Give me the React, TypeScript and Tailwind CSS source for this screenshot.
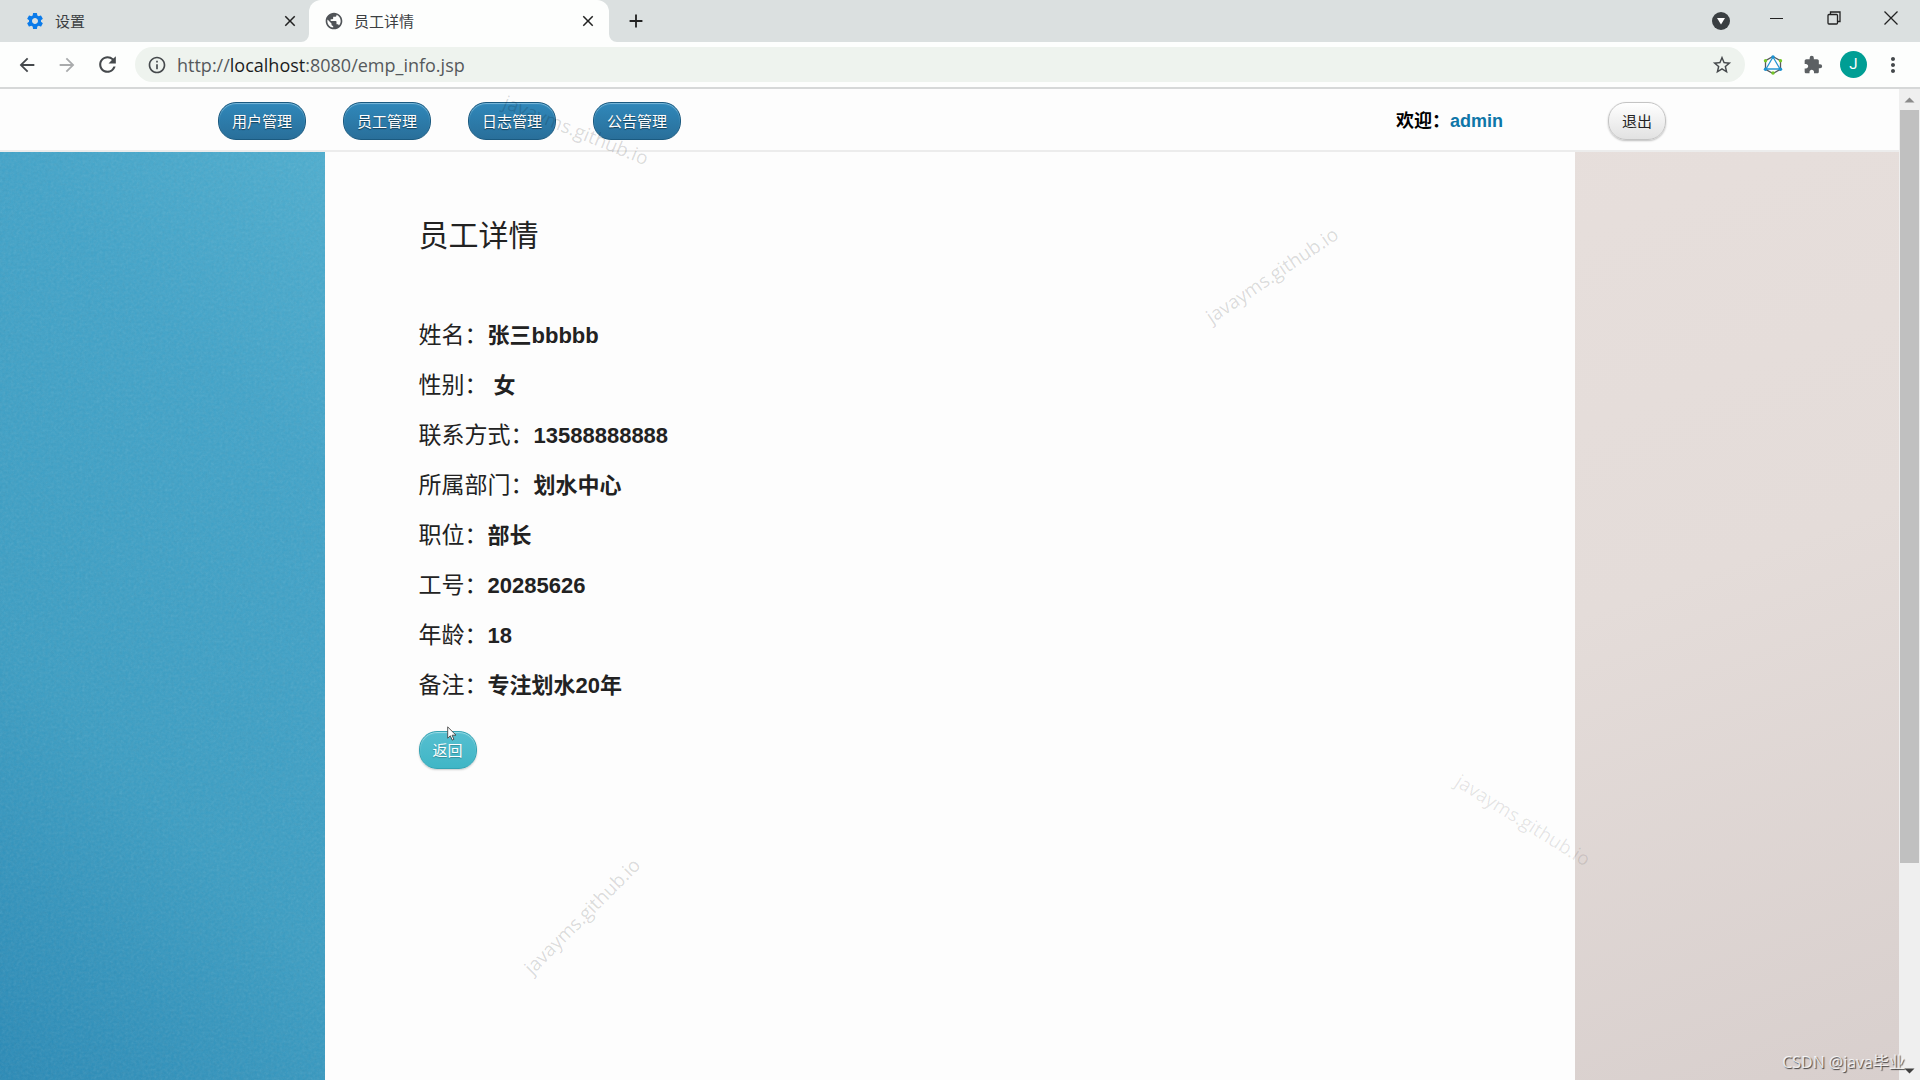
import { MdSettings, MdPublic, MdExtension, MdClose, MdAdd, MdArrowBack, MdArrowForward, MdRefresh, MdInfoOutline, MdStarBorder, MdMoreVert } from "react-icons/md";

const navItems = ["用户管理", "员工管理", "日志管理", "公告管理"];

const employee = [
    { label: "姓名：", value: "张三bbbbb" },
    { label: "性别：", value: "\u00a0女" },
    { label: "联系方式：", value: "13588888888" },
    { label: "所属部门：", value: "划水中心" },
    { label: "职位：", value: "部长" },
    { label: "工号：", value: "20285626" },
    { label: "年龄：", value: "18" },
    { label: "备注：", value: "专注划水20年" },
];

function TabBar() {
    return (
        <div className="flex h-[42px] shrink-0 bg-[#dbe0e0] text-[15px] text-[#3c4043]">
            <div className="flex w-[309px] items-center pl-[25px] pr-[10px]">
                <MdSettings className="h-5 w-5 text-[#0b7bea]" />
                <span className="ml-[10px] flex-1 pt-[2px]">设置</span>
                <button aria-label="关闭设置" className="text-[#222]">
                    <MdClose className="h-[18px] w-[18px]" />
                </button>
            </div>
            <div className="relative flex w-[300px] items-center rounded-t-xl bg-[#fdfefd] pl-[15px] pr-[12px]">
                {/* flared tab feet */}
                <svg className="absolute bottom-0 -left-2 h-2 w-2" viewBox="0 0 8 8" fill="#fdfefd">
                    <path d="M8 0v8H0a8 8 0 0 0 8-8Z" />
                </svg>
                <svg className="absolute -right-2 bottom-0 h-2 w-2" viewBox="0 0 8 8" fill="#fdfefd">
                    <path d="M0 0v8h8a8 8 0 0 1-8-8Z" />
                </svg>
                <MdPublic className="h-5 w-5 text-[#505458]" />
                <span className="ml-[10px] flex-1 pt-[2px]">员工详情</span>
                <button aria-label="关闭员工详情" className="text-[#222]">
                    <MdClose className="h-[18px] w-[18px]" />
                </button>
            </div>
            <button aria-label="新标签页" className="ml-4 text-[#222]">
                <MdAdd className="h-[22px] w-[22px]" />
            </button>
            <div className="ml-auto flex items-center text-[#222]">
                <button aria-label="搜索标签页" className="mr-[40px]">
                    <svg className="h-[18px] w-[18px]" viewBox="0 0 18 18">
                        <circle cx="9" cy="9" r="9" fill="#3a3f42" />
                        <path d="M5 6h8l-4 6.500Z" fill="#fff" />
                    </svg>
                </button>
                <button aria-label="最小化" className="mb-[6px] mr-[43px]">
                    <svg className="h-[14px] w-[14px]" viewBox="0 0 14 14" stroke="currentColor">
                        <path d="M0 7.500h13" />
                    </svg>
                </button>
                <button aria-label="还原" className="mb-[6px] mr-[43px]">
                    <svg className="h-[14px] w-[14px]" viewBox="0 0 14 14" fill="none" stroke="currentColor" strokeWidth="1.300">
                        <rect x="1" y="3.500" width="9.500" height="9.500" rx="1" />
                        <path d="M3.500 3.500V1h9.500v9.500h-2.500" />
                    </svg>
                </button>
                <button aria-label="关闭" className="mb-[6px] mr-[22px]">
                    <svg className="h-[14px] w-[14px]" viewBox="0 0 14 14" stroke="currentColor" strokeWidth="1.300">
                        <path d="M.5.5l13 13M13.5.5l-13 13" />
                    </svg>
                </button>
            </div>
        </div>
    );
}

function Toolbar() {
    return (
        <div className="flex h-[47px] shrink-0 items-center border-b-2 border-[#d6d8d8] bg-[#fdfefd] text-[#45494c]">
            <button aria-label="后退" className="ml-4">
                <MdArrowBack className="h-[22px] w-[22px]" />
            </button>
            <button aria-label="前进" className="ml-[18px] text-[#a9abac]">
                <MdArrowForward className="h-[22px] w-[22px]" />
            </button>
            <button aria-label="刷新" className="ml-[17px]">
                <MdRefresh className="h-[25px] w-[25px]" />
            </button>
            <div className="ml-[15px] flex h-[35px] min-w-0 flex-1 items-center rounded-full bg-[#eef3ee] px-[12px]">
                <MdInfoOutline className="h-5 w-5" />
                <a
                    href="http://localhost:8080/emp_info.jsp"
                    className="ml-[10px] flex-1 pt-[2px] font-['Open_Sans','Noto_Sans_CJK_SC',sans-serif] text-[18px] text-[#55595c]"
                >
                    http://<span className="text-[#1b1c1d]">localhost</span>:8080/emp_info.jsp
                </a>
                <button aria-label="收藏">
                    <MdStarBorder className="h-[22px] w-[22px]" />
                </button>
            </div>
            <button aria-label="GraphQL" className="ml-[18px]">
                <svg className="h-5 w-5" viewBox="0 0 20 20" fill="none">
                    <path d="M10 1.500l7.500 4.200v8.600L10 18.500l-7.500-4.200V5.700Z" stroke="#555a5c" strokeWidth="1.300" />
                    <path d="M10 2l7 12H3Z" stroke="#2596d1" strokeWidth="1.300" />
                    <circle cx="10" cy="2" r="1.700" fill="#1b93d4" />
                    <circle cx="17.500" cy="14.300" r="1.700" fill="#1b93d4" />
                    <circle cx="2.500" cy="14.300" r="1.700" fill="#1b93d4" />
                    <circle cx="2.500" cy="5.700" r="1.700" fill="#76c729" />
                    <circle cx="17.500" cy="5.700" r="1.700" fill="#76c729" />
                    <circle cx="10" cy="18" r="1.700" fill="#76c729" />
                </svg>
            </button>
            <button aria-label="扩展程序" className="ml-[20px] text-[#5c6063]">
                <MdExtension className="h-5 w-5" />
            </button>
            <button
                aria-label="J"
                className="ml-[17px] h-[27px] w-[27px] rounded-full bg-[#009e94] font-[Roboto,sans-serif] text-[15px] text-white"
            >
                J
            </button>
            <button aria-label="更多" className="ml-[14px] mr-[15px]">
                <MdMoreVert className="h-6 w-6" />
            </button>
        </div>
    );
}

function PageHeader() {
    return (
        <header className="flex h-[63px] shrink-0 items-center border-b-2 border-[#ececec] bg-[#fdfdfd] pt-[3px] pl-[218px] pr-[233px]">
            <nav className="flex gap-[37px]">
                {navItems.map((item) => (
                    <button
                        key={item}
                        className="h-[38px] w-[88px] rounded-[18px] border border-[#1b5a80] bg-linear-to-b from-[#3088ba] to-[#296f9a] pt-[2px] text-[15px] text-white shadow-[inset_0_1px_1px_#7dbadb] text-shadow-[0_1px_1px_rgb(0_0_0/0.5)]"
                    >
                        {item}
                    </button>
                ))}
            </nav>
            <p className="ml-auto text-[18px] font-bold text-black">
                欢迎：
                <a href="#admin" className="text-[#0e76a8]">admin</a>
            </p>
            <button className="ml-[105px] h-[38px] w-[58px] rounded-[18px] border border-[#c4c4c4] bg-linear-to-b from-white to-[#e2e2e2] pt-[2px] text-[15px] text-[#222] shadow-[0_1px_2px_rgb(0_0_0/0.25)]">
                退出
            </button>
        </header>
    );
}

function EmployeeDetail() {
    return (
        <main className="w-[1250px] max-w-full bg-[#fdfdfd] px-[94px] pt-[60px] text-[#222]">
            <h1 className="text-[30px] leading-[48px]">员工详情</h1>
            <dl className="mt-[50px]">
                {employee.map((row) => (
                    <div key={row.label} className="flex h-[50px] items-center">
                        <dt className="text-[23px]">{row.label}</dt>
                        <dd className="text-[22px] font-bold">{row.value}</dd>
                    </div>
                ))}
            </dl>
            <button className="relative mt-[21px] h-[38px] w-[58px] rounded-[18px] border border-[#35a3b3] bg-linear-to-b from-[#56bfd0] to-[#3fb6c6] pt-[2px] text-[15px] text-white shadow-[inset_0_1px_1px_#a0dde6,0_1px_2px_rgb(0_0_0/0.2)] text-shadow-[0_1px_1px_rgb(0_0_0/0.25)]">
                返回
                {/* mouse pointer */}
                <svg className="absolute -top-[6px] left-[27px] h-[15px] w-[10px]" viewBox="0 0 10 15" fill="#fff" stroke="#444" strokeWidth=".9">
                    <path d="M.7.9v11.300l2.600-2.400 1.900 4.300 1.700-.8-1.800-4.100H9Z" />
                </svg>
            </button>
        </main>
    );
}

function PaperBackground() {
    return (
        <div className="absolute inset-0 flex justify-between">
            <div className="w-1/3 bg-linear-[45deg,#2889b6,#3a9dc3_28%,#40a3c9_59%,#4cadcf_80%]">
                <svg className="h-full w-full opacity-15">
                    <filter id="grain">
                        <feTurbulence type="fractalNoise" baseFrequency="0.35" numOctaves="3" />
                        <feColorMatrix type="saturate" values="0" />
                    </filter>
                    <rect width="100%" height="100%" filter="url(#grain)" />
                </svg>
            </div>
            <div className="w-1/3 bg-linear-[160deg,#e7dfdc,#e4dcd9_50%,#d8cfcd]" />
        </div>
    );
}

function Scrollbar() {
    return (
        <div className="flex w-[21px] shrink-0 flex-col items-center bg-[#efefef]">
            <svg className="h-[21px] w-[21px] shrink-0" viewBox="0 0 21 21" fill="#8b8b8b">
                <path d="M5.500 13.500h10l-5-5Z" />
            </svg>
            <div className="h-[76%] w-[19px] bg-[#c0c0c0]" />
            <svg className="mt-auto h-[21px] w-[21px] shrink-0" viewBox="0 0 21 21" fill="#3f3f3f">
                <path d="M5.500 9.500h10l-5 5Z" />
            </svg>
        </div>
    );
}

function Watermarks() {
    return (
        <div className="pointer-events-none absolute inset-0 overflow-hidden font-['Open_Sans',sans-serif] text-[19px] leading-[24px] text-black/15">
            <span className="absolute top-[118px] left-[576px] -translate-x-1/2 rotate-[22deg]">javayms.github.io</span>
            <span className="absolute top-[263px] left-[1272px] -translate-x-1/2 rotate-[-34deg]">javayms.github.io</span>
            <span className="absolute top-[904px] left-[582px] -translate-x-1/2 rotate-[-45deg]">javayms.github.io</span>
            <span className="absolute top-[808px] left-[1523px] -translate-x-1/2 rotate-[32deg] text-black/10">javayms.github.io</span>
            <span className="absolute right-[15px] bottom-[6px] font-['Open_Sans','Noto_Sans_CJK_SC',sans-serif] text-[16px] text-white/80 text-shadow-[1px_1px_1px_rgb(0_0_0/0.7)]">
                CSDN @java毕业
            </span>
        </div>
    );
}

export default function App() {
    return (
        <div className="relative flex h-screen flex-col overflow-hidden font-['Liberation_Sans','Noto_Sans_CJK_SC',sans-serif]">
            <TabBar />
            <Toolbar />
            <div className="flex min-h-0 flex-1">
                <div className="flex min-w-0 flex-1 flex-col">
                    <PageHeader />
                    <div className="relative flex min-h-0 flex-1">
                        <PaperBackground />
                        <div className="relative flex flex-1 justify-center">
                            <EmployeeDetail />
                        </div>
                    </div>
                </div>
                <Scrollbar />
            </div>
            <Watermarks />
        </div>
    );
}
